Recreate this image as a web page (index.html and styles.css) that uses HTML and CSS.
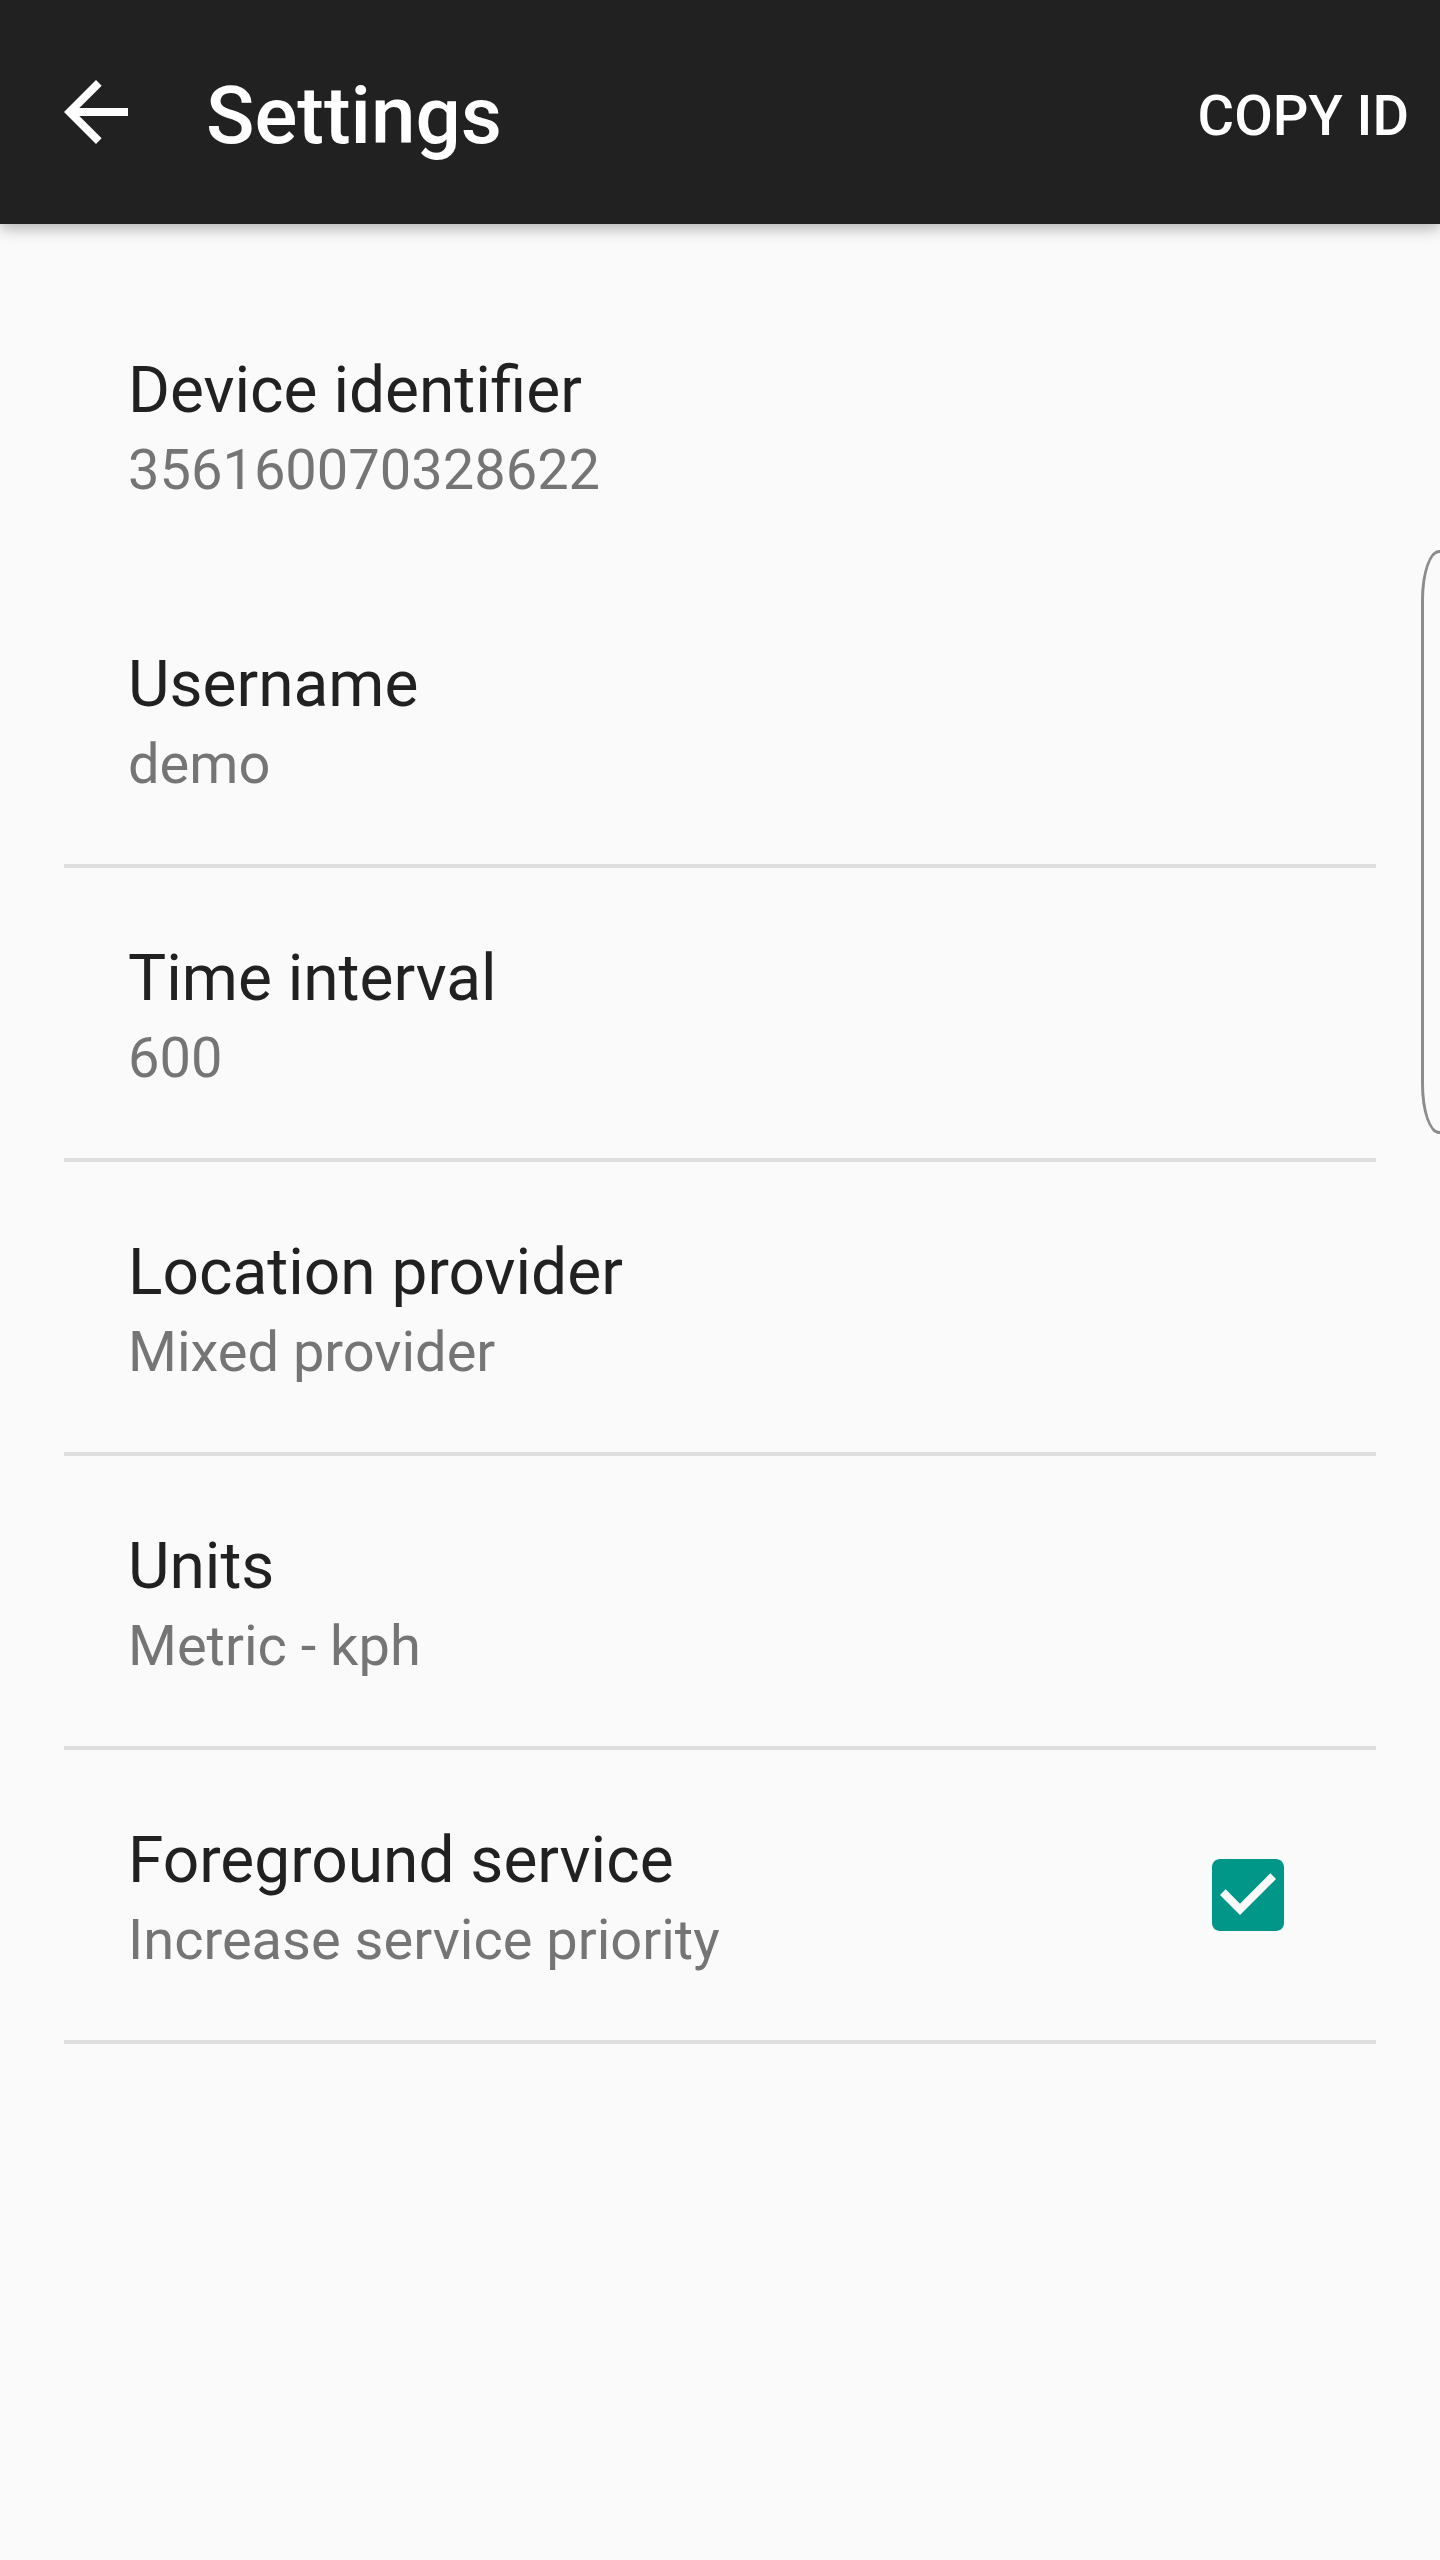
FILE: index.html
```html
<!DOCTYPE html>
<html>

	<head>
		<meta charset="UTF-8">
		<title>Settings</title>
		<link rel="stylesheet" href="styles.css">
	</head>

	<body>
		<div class="toolbar">
			<svg class="nav-icon" viewBox="0 0 24 24" width="96" height="96">
				<path d="M20 11H7.83l5.59-5.59L12 4l-8 8 8 8 1.41-1.41L7.83 13H20v-2z" fill="#ffffff"/>
			</svg>
			<h1 class="title">Settings</h1>
			<span class="action">COPY ID</span>
		</div>

		<ul class="prefs">
			<li class="pref pref-first">
				<div class="pref-text">
					<p class="pref-title">Device identifier</p>
					<p class="pref-summary">356160070328622</p>
				</div>
			</li>
			<li class="pref">
				<div class="pref-text">
					<p class="pref-title">Username</p>
					<p class="pref-summary">demo</p>
				</div>
			</li>
			<li class="pref">
				<div class="pref-text">
					<p class="pref-title">Time interval</p>
					<p class="pref-summary">600</p>
				</div>
			</li>
			<li class="pref">
				<div class="pref-text">
					<p class="pref-title">Location provider</p>
					<p class="pref-summary">Mixed provider</p>
				</div>
			</li>
			<li class="pref">
				<div class="pref-text">
					<p class="pref-title">Units</p>
					<p class="pref-summary">Metric - kph</p>
				</div>
			</li>
			<li class="pref">
				<div class="pref-text">
					<p class="pref-title">Foreground service</p>
					<p class="pref-summary">Increase service priority</p>
				</div>
				<svg class="check" viewBox="0 0 24 24" width="96" height="96">
					<path d="M19 3H5c-1.11 0-2 .9-2 2v14c0 1.1.89 2 2 2h14c1.11 0 2-.9 2-2V5c0-1.1-.89-2-2-2zm-9 14l-5-5 1.41-1.41L10 14.17l7.59-7.59L19 8l-9 9z" fill="#009688"/>
				</svg>
			</li>
		</ul>

		<!-- samsung edge panel handle -->
		<div class="edge-handle"></div>
	</body>

</html>
```

FILE: styles.css
```css
body,
ul,
p,
h1 {
	margin: 0;
	padding: 0;
}

body {
	background: #fafafa;
	font-family: Roboto, "Noto Sans", "Liberation Sans", sans-serif;
	color: #212121;
	min-height: 2560px;
}

.toolbar {
	height: 224px;
	background: #212121;
	display: flex;
	align-items: center;
	box-shadow: 0 5px 14px rgba(0, 0, 0, 0.28);
	position: relative;
	z-index: 1;
}

.nav-icon {
	margin-left: 48px;
	flex: none;
}

.title {
	margin-left: 62px;
	margin-top: 8px;
	font-size: 80px;
	font-weight: 500;
	line-height: 96px;
	color: #ffffff;
	flex: 1;
}

.action {
	margin-top: 8px;
	margin-right: 31px;
	font-size: 56px;
	font-weight: 500;
	line-height: 64px;
	color: #ffffff;
}

.prefs {
	list-style: none;
	padding-top: 56px;
	margin: 0 64px;
}

.pref {
	display: flex;
	align-items: center;
	min-height: 290px;
	box-sizing: border-box;
	padding: 0 80px 0 64px;
	border-bottom: 4px solid #dedede;
}

.pref-first {
	border-bottom-color: transparent;
}

.pref-text {
	flex: 1;
	padding: 73px 0 59px;
}

.pref-title {
	font-size: 64px;
	line-height: 76px;
	color: #212121;
}

.pref-summary {
	font-size: 56px;
	line-height: 82px;
	color: #757575;
}

.check {
	flex: none;
}

.edge-handle {
	position: absolute;
	top: 550px;
	right: 0;
	width: 16px;
	height: 578px;
	border: 3px solid #8c8c8c;
	border-right: 0;
	border-radius: 18px 0 0 18px / 50px 0 0 50px;
}
```
